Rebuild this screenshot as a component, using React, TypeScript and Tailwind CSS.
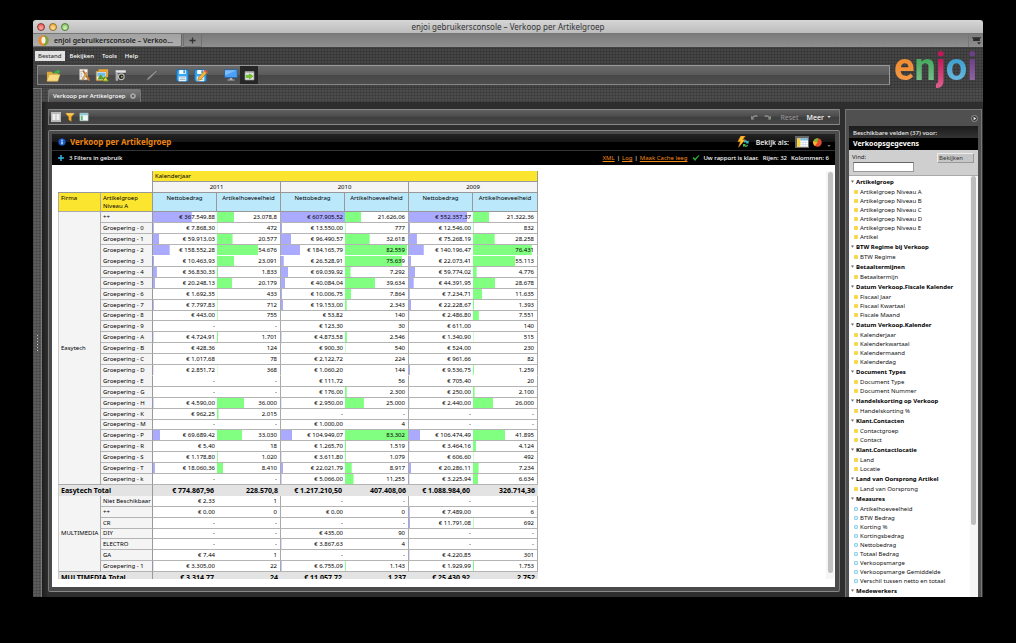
import React from "react";
import type { ReactNode } from "react";

const WEAVE =
  "bg-[repeating-linear-gradient(0deg,rgba(0,0,0,0.14)_0_1px,transparent_1px_3px),repeating-linear-gradient(90deg,rgba(0,0,0,0.12)_0_1px,transparent_1px_3px)]";

type Row = { label: string; values: string[]; open?: boolean };

const easytech: Row[] = [
  { label: "++", values: ["€ 367.549,88", "23.078,8", "€ 607.905,52", "21.626,06", "€ 552.357,37", "21.322,36"] },
  { label: "Groepering - 0", values: ["€ 7.868,30", "472", "€ 13.550,00", "777", "€ 12.546,00", "832"] },
  { label: "Groepering - 1", values: ["€ 59.913,03", "20.577", "€ 96.490,57", "32.618", "€ 75.268,19", "28.258"] },
  { label: "Groepering - 2", values: ["€ 158.552,28", "54.676", "€ 184.165,79", "82.559", "€ 140.196,47", "76.431"], open: true },
  { label: "Groepering - 3", values: ["€ 10.463,93", "23.091", "€ 26.528,91", "75.639", "€ 22.073,41", "55.113"] },
  { label: "Groepering - 4", values: ["€ 36.830,33", "1.833", "€ 69.039,92", "7.292", "€ 59.774,02", "4.776"] },
  { label: "Groepering - 5", values: ["€ 20.248,13", "20.179", "€ 40.084,04", "39.634", "€ 44.391,95", "28.678"] },
  { label: "Groepering - 6", values: ["€ 1.692,35", "433", "€ 10.006,75", "7.864", "€ 7.234,71", "11.635"] },
  { label: "Groepering - 7", values: ["€ 7.797,83", "712", "€ 19.153,00", "2.343", "€ 22.228,67", "1.393"] },
  { label: "Groepering - 8", values: ["€ 443,00", "755", "€ 53,82", "140", "€ 2.486,80", "7.551"] },
  { label: "Groepering - 9", values: ["-", "-", "€ 123,30", "30", "€ 611,00", "140"] },
  { label: "Groepering - A", values: ["€ 4.724,91", "1.701", "€ 4.873,58", "2.546", "€ 1.340,90", "515"] },
  { label: "Groepering - B", values: ["€ 428,36", "124", "€ 900,30", "540", "€ 524,00", "230"] },
  { label: "Groepering - C", values: ["€ 1.017,68", "78", "€ 2.122,72", "224", "€ 961,66", "82"] },
  { label: "Groepering - D", values: ["€ 2.851,72", "368", "€ 1.060,20", "144", "€ 9.536,75", "1.259"], open: true },
  { label: "Groepering - E", values: ["-", "-", "€ 111,72", "56", "€ 705,40", "20"] },
  { label: "Groepering - G", values: ["-", "-", "€ 176,00", "2.300", "€ 250,00", "2.100"] },
  { label: "Groepering - H", values: ["€ 4.590,00", "36.000", "€ 2.950,00", "25.000", "€ 2.440,00", "26.000"] },
  { label: "Groepering - K", values: ["€ 962,25", "2.015", "-", "-", "-", "-"] },
  { label: "Groepering - M", values: ["-", "-", "€ 1.000,00", "4", "-", "-"] },
  { label: "Groepering - P", values: ["€ 69.689,42", "33.030", "€ 104.949,07", "83.302", "€ 106.474,49", "41.895"] },
  { label: "Groepering - R", values: ["€ 5,40", "18", "€ 1.265,70", "1.519", "€ 3.464,16", "4.124"] },
  { label: "Groepering - S", values: ["€ 1.178,80", "1.020", "€ 3.611,80", "1.079", "€ 606,60", "492"] },
  { label: "Groepering - T", values: ["€ 18.060,36", "8.410", "€ 22.021,79", "8.917", "€ 20.286,11", "7.234"] },
  { label: "Groepering - k", values: ["-", "-", "€ 5.066,00", "11.255", "€ 3.225,94", "6.634"] },
];

const multimedia: Row[] = [
  { label: "Niet Beschikbaar", values: ["€ 2,33", "1", "-", "-", "-", "-"] },
  { label: "++", values: ["€ 0,00", "0", "€ 0,00", "0", "€ 7.489,00", "6"] },
  { label: "CR", values: ["-", "-", "-", "-", "€ 11.791,08", "692"] },
  { label: "DIY", values: ["-", "-", "€ 435,00", "90", "-", "-"] },
  { label: "ELECTRO", values: ["-", "-", "€ 3.867,63", "4", "-", "-"] },
  { label: "GA", values: ["€ 7,44", "1", "-", "-", "€ 4.220,85", "301"] },
  { label: "Groepering - 1", values: ["€ 3.305,00", "22", "€ 6.755,09", "1.143", "€ 1.929,99", "1.753"] },
];

const fieldGroups: { name: string; items: string[]; measure?: boolean }[] = [
  {
    name: "Artikelgroep",
    items: ["Artikelgroep Niveau A", "Artikelgroep Niveau B", "Artikelgroep Niveau C", "Artikelgroep Niveau D", "Artikelgroep Niveau E", "Artikel"],
  },
  { name: "BTW Regime bij Verkoop", items: ["BTW Regime"] },
  { name: "Betaaltermijnen", items: ["Betaaltermijn"] },
  { name: "Datum Verkoop.Fiscale Kalender", items: ["Fiscaal Jaar", "Fiscaal Kwartaal", "Fiscale Maand"] },
  { name: "Datum Verkoop.Kalender", items: ["Kalenderjaar", "Kalenderkwartaal", "Kalendermaand", "Kalenderdag"] },
  { name: "Document Types", items: ["Document Type", "Document Nummer"] },
  { name: "Handelskorting op Verkoop", items: ["Handelskorting %"] },
  { name: "Klant.Contacten", items: ["Contactgroep", "Contact"] },
  { name: "Klant.Contactlocatie", items: ["Land", "Locatie"] },
  { name: "Land van Oorsprong Artikel", items: ["Land van Oorsprong"] },
  {
    name: "Measures",
    measure: true,
    items: ["Artikelhoeveelheid", "BTW Bedrag", "Korting %", "Kortingsbedrag", "Nettobedrag", "Totaal Bedrag", "Verkoopsmarge", "Verkoopsmarge Gemiddelde", "Verschil tussen netto en totaal"],
  },
  { name: "Medewerkers", items: [] },
];

const MAX_AMOUNT = 607905.52;
const MAX_COUNT = 83302;

function toNumber(text: string) {
  if (text === "-") return 0;
  return parseFloat(text.replace("€ ", "").split(".").join("").replace(",", "."));
}

function Icon({ children, className = "size-4" }: { children: ReactNode; className?: string }) {
  return (
    <svg viewBox="0 0 16 16" className={className} aria-hidden="true">
      {children}
    </svg>
  );
}

function ValueCell({ value, column }: { value: string; column: number }) {
  const amount = column % 2 === 0;
  const share = toNumber(value) / (amount ? MAX_AMOUNT : MAX_COUNT);
  return (
    <td
      className={
        (amount
          ? "bg-[linear-gradient(#aaaaff,#aaaaff)] pr-[2px] "
          : "border-r border-r-[#aaa] bg-[linear-gradient(#80ff80,#80ff80)] pr-[3px] ") +
        "border-b border-b-[#b4b4b4] bg-no-repeat text-right group-data-[open=true]:border-b-transparent"
      }
      style={{ backgroundSize: `${share > 0.004 ? share * 100 : 0}% 100%` }}
    >
      {value}
    </td>
  );
}

function DataRows({ firm, rows, total }: { firm: string; rows: Row[]; total: string[] }) {
  return (
    <>
      {rows.map((row, i) => (
        <tr key={row.label} data-open={row.open} className="group h-[11px] nth-[10n]:h-[10px]">
          {i === 0 && (
            <th rowSpan={rows.length} scope="rowgroup" className="border-r border-b border-l border-[#aaa] border-l-[#ccc] bg-[#f4f4f4] pl-[2px] text-left font-normal">
              {firm}
            </th>
          )}
          <th scope="row" className="border-r border-b border-r-[#999] border-b-[#b4b4b4] bg-[#f4f4f4] pl-[2px] text-left font-normal whitespace-nowrap group-data-[open=true]:border-b-transparent">
            {row.label}
          </th>
          {row.values.map((value, c) => (
            <ValueCell key={c} value={value} column={c} />
          ))}
        </tr>
      ))}
      <tr className="h-[11px] bg-[#e3e3e3] text-[7px] font-bold">
        <th scope="row" colSpan={2} className="border-r border-l border-r-[#999] border-l-[#ccc] pl-[2px] text-left">
          {firm} Total
        </th>
        {total.map((value, c) => (
          <td key={c} className="pr-[3px] text-right whitespace-nowrap">
            {value}
          </td>
        ))}
      </tr>
    </>
  );
}

function PivotTable() {
  const years = ["2011", "2010", "2009"];
  return (
    <table className="w-[480px] table-fixed border-separate border-spacing-0 text-[6px] leading-[9px] text-black">
      <colgroup>
        <col className="w-[43px]" />
        <col className="w-[52px]" />
        <col className="w-[64px]" />
        <col className="w-[64px]" />
        <col className="w-[64px]" />
        <col className="w-[64px]" />
        <col className="w-[64px]" />
        <col className="w-[65px]" />
      </colgroup>
      <thead>
        <tr className="h-[11px]">
          <td colSpan={2} className="border-r border-[#999]" />
          <th colSpan={6} className="border-r border-b border-[#999] bg-[#fbe52f] pl-[2px] text-left font-normal">
            Kalenderjaar
          </th>
        </tr>
        <tr className="h-[11px]">
          <td colSpan={2} className="border-r border-b border-[#999]" />
          {years.map((year) => (
            <th key={year} colSpan={2} className="border-r border-b border-[#999] bg-[#f4f4f4] font-normal">
              {year}
            </th>
          ))}
        </tr>
        <tr className="h-[19px] align-top">
          <th className="border-r border-b border-l border-[#aaa] bg-[#fbe52f] pt-px pl-[2px] text-left font-normal">Firma</th>
          <th className="border-r border-b border-[#999] bg-[#fbe52f] pt-px pl-[2px] text-left leading-[8px] font-normal">
            Artikelgroep
            <br />
            Niveau A
          </th>
          {years.map((year) => (
            <React.Fragment key={year}>
              <th className="border-r border-b border-[#999] bg-[#bbe8fa] pt-px font-normal">Nettobedrag</th>
              <th className="border-r border-b border-[#999] bg-[#bbe8fa] pt-px font-normal">Artikelhoeveelheid</th>
            </React.Fragment>
          ))}
        </tr>
      </thead>
      <tbody>
        <DataRows
          firm="Easytech"
          rows={easytech}
          total={["€ 774.867,96", "228.570,8", "€ 1.217.210,50", "407.408,06", "€ 1.088.984,60", "326.714,36"]}
        />
        <DataRows
          firm="MULTIMEDIA"
          rows={multimedia}
          total={["€ 3.314,77", "24", "€ 11.057,72", "1.237", "€ 25.430,92", "2.752"]}
        />
      </tbody>
    </table>
  );
}

function ToolButton({ label, children, active }: { label: string; children: ReactNode; active?: boolean }) {
  return (
    <button
      type="button"
      aria-label={label}
      className={active ? "flex w-[18px] items-center justify-center bg-[#262626]" : "flex w-[18px] items-center justify-center"}
    >
      {children}
    </button>
  );
}

function Floppy() {
  return (
    <>
      <path d="M2 2h12v12H3l-1-1z" fill="#3aa7ee" stroke="#1173bd" />
      <path d="M4.500 2h7v4.500h-7z" fill="#f4f9fd" />
      <path d="M9 2.500h1.500v3H9z" fill="#2a83c4" />
      <path d="M4 9h8v5H4z" fill="#f0f4f7" />
      <path d="M5 10.500h6M5 12.300h6" stroke="#8fa8b8" strokeWidth=".8" />
    </>
  );
}

function Toolbar() {
  return (
    <div className="ml-1 flex h-5 gap-[13px] rounded-[1px] border border-t-[#999] border-r-[#999] border-b-[#858585] border-l-[#888] bg-[linear-gradient(#6a6a6a_0%,#5a5a5a_50%,#484848_50%,#4e4e4e_100%)] pl-[6px]">
      <ToolButton label="Openen">
        <Icon className="size-[15px]">
          <path d="M1 4h5l1.500 1.500H13V14H1z" fill="#d9a93a" />
          <path d="M1 14 3.500 7H15l-2.500 7z" fill="#f9dc84" stroke="#d5a63c" strokeWidth=".5" />
          <path d="M8 7c0-3 2-4 4-4V1l3.500 3L12 7V5c-2 0-3 .5-4 2z" fill="#35b24a" />
        </Icon>
      </ToolButton>
      <div className="flex">
        <ToolButton label="Bewerken">
          <Icon className="size-[14px]">
            <path d="M3 1.500h9v12H3z" fill="#f4f4f4" stroke="#bbb" strokeWidth=".5" />
            <path d="M4 4h2M4 6h2M4 8h2M4 10h2" stroke="#aaa" />
            <path d="m6 3.500 1.500-1.500 7 10.500V15l-2-1z" fill="#c77a2d" />
            <path d="M12 6 8 12.500 6 14.500l.3-3L10.500 5z" fill="#e8bb66" stroke="#8a5a20" strokeWidth=".5" />
          </Icon>
        </ToolButton>
        <ToolButton label="Afbeelding">
          <Icon className="size-[14px]">
            <path d="M4 1.500h11v9H4z" fill="#f2a431" />
            <path d="M1.500 4h11.500v10H1.500z" fill="#fff" stroke="#d9982c" />
            <path d="M2.500 5h9.500v5H2.500z" fill="#6ebcf0" />
            <path d="m2.500 13 4-6 3 4 1-1.500 2 3.500z" fill="#5c9b26" />
            <path d="m9 14 3-4 3.500 5h-6z" fill="#f0d638" stroke="#3f7f1c" />
          </Icon>
        </ToolButton>
        <ToolButton label="Momentopname">
          <Icon className="size-[13px]">
            <path d="M2 3.500h12.500v11H2z" fill="#4a4a4a" />
            <path d="M2 1.500h12.500v3H2z" fill="#e6e6e6" />
            <path d="M2 4.500h3v10H2z" fill="#aaa" />
            <circle cx="9" cy="9.500" r="4.200" fill="#bbb" />
            <circle cx="9" cy="9.500" r="2.800" fill="#222" />
            <circle cx="9.500" cy="9.500" r="1.200" fill="#86b548" />
          </Icon>
        </ToolButton>
      </div>
      <ToolButton label="Potlood">
        <Icon className="size-[13px]">
          <path d="M13.500 1.500 15 3 5 13l-3.500 1.500L3 11z" fill="#909090" stroke="#444" strokeWidth=".6" />
        </Icon>
      </ToolButton>
      <div className="flex">
        <ToolButton label="Opslaan">
          <Icon className="size-[15px]">
            <Floppy />
          </Icon>
        </ToolButton>
        <ToolButton label="Opslaan als">
          <Icon className="size-[15px]">
            <Floppy />
            <path d="m13 2 2.500 2.500-7 7.500L5 13.500 6 10z" fill="#f3b53c" stroke="#a66516" strokeWidth=".6" />
            <path d="m13 1.500 2.500 2.500-1.500 1.500-2.300-2.300z" fill="#e2564a" />
          </Icon>
        </ToolButton>
      </div>
      <div className="flex">
        <ToolButton label="Scherm">
          <Icon className="size-[14px]">
            <path d="M.8 2h14.400v9H.8z" fill="#4aa0f5" stroke="#2b5f9b" />
            <path d="M1.200 2.500h13L1.200 8.500z" fill="#7dbefa" />
            <path d="M6.500 11.500h3v1.500H12v1.200H4V13h2.500z" fill="#aab4bf" />
          </Icon>
        </ToolButton>
        <ToolButton label="Uitvoeren" active>
          <Icon className="size-[11px]">
            <path d="M1.500 2.500h13v12h-13z" fill="#e2e4e2" stroke="#9a9a9a" />
            <path d="M1.500 2h13v2h-13z" fill="#a5a5a5" />
            <path d="M3.500 7.500H8V5.500L13 9l-5 4v-2H3.500z" fill="#73c91c" stroke="#4a9a12" strokeWidth=".8" />
          </Icon>
        </ToolButton>
      </div>
    </div>
  );
}

function Logo() {
  return (
    <div className="w-[93px] shrink-0 pl-1 font-[Roboto,sans-serif] text-[38px] leading-[41px] font-bold" aria-label="enjoi">
      <span className="bg-[linear-gradient(#f08a30_30%,#f5a04e)] bg-clip-text text-transparent">e</span>
      <span className="bg-[linear-gradient(#43a85c_30%,#8cc79a)] bg-clip-text text-transparent">n</span>
      <span className="bg-[linear-gradient(#c2185b_30%,#e0628f)] bg-clip-text text-transparent">j</span>
      <span className="bg-[linear-gradient(#3a9fd0_30%,#7cc0e2)] bg-clip-text text-transparent">o</span>
      <span className="bg-[linear-gradient(#6d3f86_30%,#9a72ab)] bg-clip-text text-transparent">i</span>
    </div>
  );
}

const PANEL = "border border-t-[#888] border-r-[#777] border-b-[#888] border-l-[#777]";

function FilterBar() {
  return (
    <div className={`${PANEL} flex h-4 items-center rounded-[1px] bg-[linear-gradient(#606060_0%,#4c4c4c_45%,#3e3e3e_50%,#474747_100%)] pr-2 pl-[2px] text-[7px] leading-none`}>
      <button type="button" aria-label="Kolommen" className="mr-1 flex size-[10px] items-center justify-center bg-[#b9b9b9]">
        <Icon className="size-2">
          <path d="M1 2h6v12H1zM9 2h6v12H9z" fill="#eee" />
        </Icon>
      </button>
      <button type="button" aria-label="Filter" className="mr-1">
        <Icon className="size-[10px]">
          <path d="M1 2h14l-5 6v7l-4-2.500V8z" fill="#f7b52c" stroke="#c9831a" strokeWidth=".8" />
          <path d="M2 2.500h12l-1 1.500H3z" fill="#fde39a" />
        </Icon>
      </button>
      <button type="button" aria-label="Indeling">
        <Icon className="size-[10px]">
          <path d="M1.500 2h13v12h-13z" fill="#eef7f8" stroke="#b5cdd1" />
          <path d="M1.500 2h13v3h-13z" fill="#8fc6d0" />
          <path d="M3 6h3v7H3z" fill="#62b978" />
        </Icon>
      </button>
      <button type="button" aria-label="Ongedaan maken" className="ml-auto">
        <Icon className="size-2">
          <path d="M2 5v8h7L6.500 10.500C8 8 11 7 15 8V5C10 4 6 5.500 4.500 8z" fill="#8a8f8a" />
        </Icon>
      </button>
      <button type="button" aria-label="Opnieuw" className="mr-2 ml-[6px]">
        <Icon className="size-2">
          <path d="M14 5v8H7l2.500-2.500C8 8 5 7 1 8V5c5-1 9 .5 10.500 3z" fill="#8a8f8a" />
        </Icon>
      </button>
      <button type="button" className="mr-2 text-[#999]">Reset</button>
      <button type="button" className="flex items-center gap-[3px] font-medium text-white">
        Meer
        <Icon className="size-1">
          <path d="M1 4h14l-7 8z" fill="#ddd" />
        </Icon>
      </button>
    </div>
  );
}

function Report() {
  return (
    <section className={`${PANEL} flex min-h-0 flex-1 flex-col rounded-[2px] bg-[#4a4a4a] pt-[3px] pr-1 pb-1 pl-[3px]`}>
      <header className="bg-black text-[6px] leading-none text-white">
        <div className="flex h-[17px] items-center border-b border-[#333] bg-[linear-gradient(#232323_0%,#161616_48%,#000_50%)] pr-1 pl-1">
          <Icon className="mr-1 ml-[2px] size-2">
            <circle cx="8" cy="8" r="7" fill="#1c5fd0" stroke="#123d8c" />
            <circle cx="8" cy="4.500" r="1.400" fill="#fff" />
            <path d="M6.800 7h2.400v5.500H6.800z" fill="#fff" />
          </Icon>
          <h1 className="text-[8px] font-bold text-[#ee8412]">Verkoop per Artikelgroep</h1>
          <Icon className="mr-[7px] ml-auto size-3">
            <path d="M5 0h6L7.500 5H11L2 15l2.500-7.500H1z" fill="#fdbd2e" stroke="#e2761b" strokeWidth=".6" />
            <path d="M9 7.500c1-2.500 4-2.500 5-.5l1.500-1v4h-4l1.200-1c-1-1.200-2-.8-2.700 0z" fill="#3fb6c6" />
            <path d="M15 12c-1 3-4 3-5.500 1.500L8 14.500v-4h4L10.800 12c1 1 2 .8 2.700-.5z" fill="#45b35a" />
          </Icon>
          <span className="mr-[6px] text-[7px] font-medium">Bekijk als:</span>
          <button type="button" aria-label="Tabel" className="mr-1 flex h-3 w-[14px] items-center justify-center bg-[#666]">
            <Icon className="size-[11px]">
              <path d="M0 2h16v12H0z" fill="#fff" />
              <path d="M0 2h5v12H0z" fill="#f6cf45" />
              <path d="M5 2h11v3H5z" fill="#6fb7e6" />
              <path d="M5 8h11M5 11h11M9 2v12M12.500 2v12" stroke="#b9cfdd" strokeWidth=".8" />
            </Icon>
          </button>
          <button type="button" aria-label="Grafiek" className="mr-[5px]">
            <Icon className="size-[9px]">
              <circle cx="8" cy="8" r="7.500" fill="#e5482f" />
              <path d="M8 8 1 5a7.500 7.500 0 0 1 8-4.500z" fill="#6fbf2e" />
              <path d="M8 8 3 14A7.500 7.500 0 0 1 1 5z" fill="#f6b62a" />
            </Icon>
          </button>
          <Icon className="mt-2 size-1">
            <path d="M1 4h14l-7 8z" fill="#777" />
          </Icon>
        </div>
        <div className="flex h-[14px] items-center pr-[6px] pl-[6px]">
          <Icon className="mr-[5px] size-[6px]">
            <path d="M6 0h4v6h6v4h-6v6H6v-6H0V6h6z" fill="#35b3e4" />
          </Icon>
          <span className="font-medium">3 Filters in gebruik</span>
          <nav className="ml-auto flex gap-[2px]">
            <a href="#xml" className="text-[#f08a1a] underline">XML</a>
            <span>|</span>
            <a href="#log" className="text-[#f08a1a] underline">Log</a>
            <span>|</span>
            <a href="#cache" className="text-[#f08a1a] underline">Maak Cache leeg</a>
          </nav>
          <Icon className="mr-[3px] ml-[5px] size-2">
            <path d="m1 8 2.500-2L6 9l7.500-7L15 3 6 14z" fill="#2fa636" />
          </Icon>
          <span className="font-medium">Uw rapport is klaar.</span>
          <span className="ml-1 font-medium">Rijen: 32</span>
          <span className="ml-1 font-medium">Kolommen: 6</span>
        </div>
      </header>
      <div className="flex min-h-0 flex-1 bg-white pt-[6px] pr-px pb-2 pl-[6px]">
        <div className="min-h-0 flex-1 overflow-hidden">
          <PivotTable />
        </div>
        <div className="w-2 bg-[#f6f6f6] pt-px pb-[6px] pl-[2px]">
          <div className="h-full w-[5px] rounded-full bg-[#c1c1c1]" />
        </div>
      </div>
    </section>
  );
}

function FieldPanel() {
  return (
    <aside className="flex w-[137px] shrink-0 flex-col border-t border-r border-l border-[#777] bg-[#505050] px-[3px] text-[6px]">
      <div className="flex h-4 shrink-0 items-center justify-end">
        <button type="button" aria-label="Paneel inklappen">
          <Icon className="size-[7px]">
            <circle cx="8" cy="8" r="6.800" fill="#333" stroke="#bbb" strokeWidth="1.500" />
            <path d="m6 4 6 4-6 4z" fill="#eee" />
          </Icon>
        </button>
      </div>
      <div className="h-3 shrink-0 bg-[linear-gradient(#1c1c1c,#333)] pl-1 leading-[15px] font-medium text-[#eee]">Beschikbare velden (37) voor:</div>
      <h2 className="h-3 shrink-0 bg-black pl-1 text-[7px] leading-[12px] font-bold text-white">Verkoopsgegevens</h2>
      <form className="flex h-[26px] shrink-0 items-start justify-between border-b border-[#aaa] bg-[#cfcfcf] pt-[3px] pr-1 pl-[3px] leading-[9px]" onSubmit={(e) => e.preventDefault()}>
        <div className="flex flex-col text-[#222]">
          <label htmlFor="find">Vind:</label>
          <input id="find" type="text" className="ml-px h-[10px] w-[61px] border border-[#999] border-t-[#666] bg-white px-px" />
        </div>
        <button type="button" className="flex h-[10px] items-center gap-1 border border-[#999] border-t-[#eee] border-l-[#eee] bg-[#c6c6c6] px-px text-[#333]">
          Bekijken
          <Icon className="size-[5px]">
            <path d="M1 4h14l-7 8z" fill="#d5d5d5" stroke="#aaa" />
          </Icon>
        </button>
      </form>
      <div className="flex min-h-0 flex-1 bg-white">
        <div className="min-w-0 flex-1 overflow-hidden pl-[2px] text-[#111]">
          {fieldGroups.map((group) => (
            <div key={group.name}>
              <h3 className="flex h-[11px] items-center gap-[2px] leading-none font-bold whitespace-nowrap text-black">
                <Icon className="size-[3px]">
                  <path d="M0 2h16l-8 12z" fill="#666" />
                </Icon>
                {group.name}
              </h3>
              <ul>
                {group.items.map((item) => (
                  <li key={item} className="flex h-[9px] items-center gap-[2px] pl-[3px] leading-none whitespace-nowrap">
                    <span className={group.measure ? "size-1 rounded-[1px] border border-[#8ed2ee] bg-[#d6f0fb]" : "size-1 rounded-[1px] bg-[#f7d84a]"} />
                    {item}
                  </li>
                ))}
              </ul>
            </div>
          ))}
        </div>
        <div className="w-2 shrink-0 bg-[#f6f6f6] pl-px">
          <div className="h-[83%] w-[5px] rounded-full bg-[#bdbdbd]" />
        </div>
      </div>
    </aside>
  );
}

export default function App() {
  return (
    <div className="flex h-screen flex-col bg-black px-[33px] pt-5 pb-[46px] font-['Noto_Sans',sans-serif]">
      <div className="flex min-h-0 flex-1 flex-col overflow-hidden rounded-t-[3px] bg-[#2b2b2b]">
        <div className="flex h-[13px] shrink-0 items-center bg-[linear-gradient(#d6d6d6,#bcbcbc)]">
          <div className="flex w-16 gap-1 pl-1">
            <span className="size-2 rounded-full border border-[#8f3430] bg-[radial-gradient(circle_at_50%_70%,#ffb0aa,#e0443e)]" />
            <span className="size-2 rounded-full border border-[#9b6d22] bg-[radial-gradient(circle_at_50%_70%,#ffe6a0,#e59b33)]" />
            <span className="size-2 rounded-full border border-[#4e7f3c] bg-[radial-gradient(circle_at_50%_70%,#d8f7b8,#79b356)]" />
          </div>
          <div className="flex-1 text-center text-[8px] leading-none text-[#333]">enjoi gebruikersconsole – Verkoop per Artikelgroep</div>
          <div className="w-16" />
        </div>
        <div className="flex h-[14px] shrink-0 border-t border-[#777] bg-[linear-gradient(#7b7b7b,#8f8f8f)]">
          <div className="flex w-[149px] items-center rounded-b-[2px] border-r border-b border-[#666] bg-[linear-gradient(#a2a2a2,#aeaeae)] pl-[5px] text-[7px] leading-none font-semibold whitespace-nowrap text-[#222]">
            <Icon className="mr-[5px] size-[11px]">
              <circle cx="8" cy="8" r="7.500" fill="#e88a2c" />
              <path d="M8 .5a7.500 7.500 0 0 1 0 15c3-4 3-11 0-15z" fill="#7ba23c" />
              <ellipse cx="8" cy="7.500" rx="3" ry="5" fill="#f8f1e4" />
            </Icon>
            enjoi gebruikersconsole – Verkoo...
          </div>
          <button type="button" aria-label="Nieuw tabblad" className="ml-px flex w-[19px] items-center justify-center rounded-b-[2px] border border-t-0 border-[#707070]">
            <Icon className="size-[7px]">
              <path d="M6.500 1h3v5.500H15v3H9.500V15h-3V9.500H1v-3h5.500z" fill="#333" />
            </Icon>
          </button>
          <button type="button" aria-label="Tabbladen" className="ml-auto flex w-[15px] items-center justify-center border-l border-[#777]">
            <Icon className="size-[9px]">
              <path d="M0 2h16v2h-2v5H2V4H0zM9 11h7l-3.500 4z" fill="#2b2b2b" />
            </Icon>
          </button>
        </div>
        <div className={`${WEAVE} flex h-[41px] shrink-0 bg-[#454545]`}>
          <div className="min-w-0 flex-1">
            <nav className="flex h-[18px] items-center gap-[2px] pl-[2px] text-[6px] leading-[10px] font-medium text-white">
              <button type="button" className="bg-[#e4e4e4] px-[3px] text-[#333]">Bestand</button>
              <button type="button" className="px-[3px]">Bekijken</button>
              <button type="button" className="px-[3px]">Tools</button>
              <button type="button" className="px-[3px]">Help</button>
            </nav>
            <Toolbar />
          </div>
          <Logo />
        </div>
        <div className="flex min-h-0 flex-1">
          <div className={`${WEAVE} flex w-[9px] shrink-0 items-center justify-center border-t border-r border-[#777] bg-[#5c5c5c]`}>
            <div className="h-4 w-px bg-[repeating-linear-gradient(#ccc_0_1px,transparent_1px_3px)]" />
          </div>
          <div className="flex min-w-0 flex-1 flex-col bg-[linear-gradient(90deg,#1e1e1e,#2e2e2e_6px)]">
            <div className={`${WEAVE} flex h-[14px] shrink-0 items-end bg-[#4c4c4c] pl-[6px]`}>
              <div className="flex h-[13px] items-center gap-1 rounded-t-[2px] border border-b-0 border-[#777] bg-[linear-gradient(#7a7a7a,#505050)] px-1 text-[6px] leading-none font-medium text-white">
                Verkoop per Artikelgroep
                <button type="button" aria-label="Tabblad sluiten">
                  <Icon className="size-[6px]">
                    <circle cx="8" cy="8" r="7.500" fill="#aaa" />
                    <path d="m5 5 6 6m0-6-6 6" stroke="#444" strokeWidth="2" />
                  </Icon>
                </button>
              </div>
            </div>
            <div className="flex min-h-0 flex-1 gap-[5px] pt-[7px] pr-px pl-[6px]">
              <main className="flex min-w-0 flex-1 flex-col gap-[5px] pb-[5px]">
                <FilterBar />
                <Report />
              </main>
              <FieldPanel />
            </div>
          </div>
        </div>
      </div>
    </div>
  );
}
